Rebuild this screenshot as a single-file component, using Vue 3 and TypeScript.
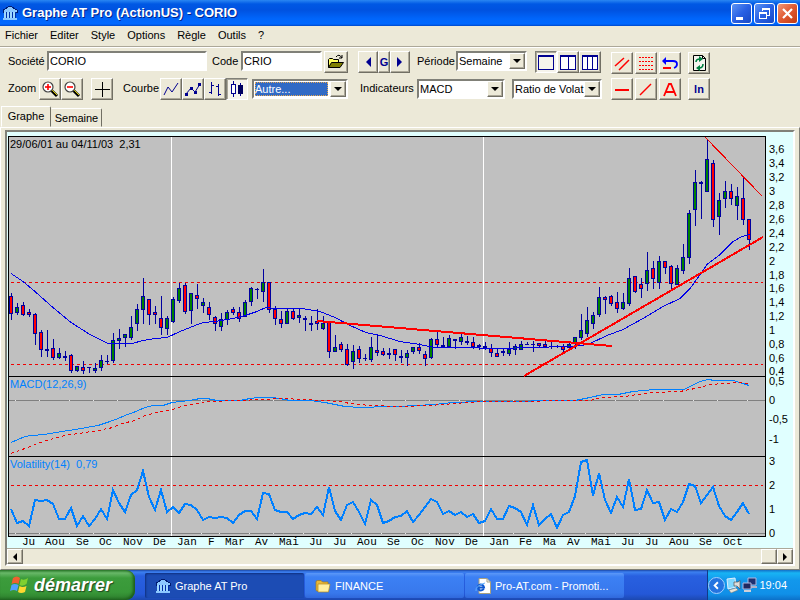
<script setup lang="ts">
import { ref } from 'vue'

type Kind = 'g' | 'r' | 'd'
type Bar = [high: number, top: number, bottom: number, low: number, kind: Kind]

const STEP = 6
const FIRST_X = 11

const bars: Bar[] = [
  [293, 296, 314, 320, 'r'], [303, 307, 313, 315, 'g'], [302, 305, 315, 316, 'r'], [309, 312, 315, 317, 'r'],
  [313, 314, 334, 345, 'r'], [330, 332, 350, 357, 'r'], [330, 349, 351, 357, 'd'], [339, 348, 358, 360, 'r'],
  [348, 353, 358, 359, 'g'], [351, 356, 358, 361, 'd'], [354, 355, 371, 373, 'r'], [366, 366, 371, 372, 'g'],
  [361, 367, 371, 374, 'r'], [367, 367, 368, 373, 'd'], [363, 368, 371, 373, 'g'], [355, 360, 368, 371, 'g'],
  [355, 361, 362, 364, 'd'], [333, 340, 361, 363, 'g'], [329, 338, 341, 349, 'g'], [334, 334, 338, 347, 'g'],
  [316, 327, 338, 340, 'g'], [304, 309, 324, 331, 'g'], [278, 296, 310, 324, 'g'], [299, 299, 315, 325, 'r'],
  [306, 312, 315, 324, 'r'], [296, 318, 328, 335, 'r'], [316, 318, 329, 335, 'g'], [297, 299, 322, 323, 'g'],
  [283, 288, 301, 303, 'g'], [283, 285, 312, 314, 'r'], [293, 293, 311, 324, 'g'], [284, 295, 299, 309, 'r'],
  [298, 302, 306, 313, 'g'], [302, 307, 315, 320, 'r'], [316, 317, 324, 331, 'r'], [313, 319, 327, 331, 'g'],
  [310, 312, 320, 325, 'g'], [307, 309, 313, 315, 'r'], [307, 312, 319, 322, 'r'], [300, 302, 317, 317, 'g'],
  [287, 288, 302, 306, 'g'], [288, 289, 290, 299, 'd'], [269, 282, 292, 302, 'g'], [282, 282, 310, 313, 'r'],
  [306, 309, 319, 325, 'r'], [311, 319, 324, 328, 'r'], [309, 311, 324, 324, 'g'], [309, 311, 319, 320, 'r'],
  [309, 315, 318, 323, 'g'], [316, 318, 320, 331, 'd'], [316, 323, 325, 331, 'd'], [309, 321, 324, 330, 'r'],
  [316, 323, 329, 330, 'g'], [322, 322, 352, 358, 'r'], [335, 347, 352, 352, 'g'], [342, 344, 350, 352, 'r'],
  [344, 349, 365, 366, 'r'], [345, 351, 362, 369, 'g'], [346, 349, 359, 363, 'r'], [354, 358, 359, 361, 'd'],
  [337, 347, 360, 362, 'g'], [334, 350, 353, 356, 'r'], [348, 351, 355, 356, 'r'], [348, 353, 355, 359, 'd'],
  [349, 349, 355, 361, 'r'], [350, 356, 358, 363, 'd'], [350, 353, 358, 366, 'g'], [347, 347, 352, 354, 'g'],
  [343, 347, 351, 354, 'r'], [351, 354, 359, 366, 'r'], [338, 339, 358, 359, 'g'], [331, 339, 345, 348, 'r'],
  [337, 345, 347, 348, 'd'], [335, 338, 347, 348, 'g'], [339, 339, 341, 349, 'd'], [334, 337, 342, 345, 'g'],
  [336, 341, 343, 345, 'd'], [337, 342, 347, 349, 'r'], [344, 345, 347, 350, 'd'], [342, 346, 349, 350, 'd'],
  [344, 348, 353, 357, 'r'], [349, 353, 357, 357, 'r'], [348, 351, 353, 356, 'd'], [342, 349, 354, 356, 'g'],
  [344, 346, 350, 355, 'g'], [341, 344, 350, 350, 'g'], [342, 344, 345, 345, 'd'], [341, 344, 345, 352, 'd'],
  [343, 343, 346, 348, 'r'], [341, 344, 347, 347, 'r'], [342, 346, 347, 349, 'd'], [345, 346, 347, 348, 'd'],
  [344, 346, 350, 352, 'r'], [342, 344, 348, 349, 'g'], [337, 337, 344, 349, 'g'], [314, 330, 338, 340, 'g'],
  [307, 320, 334, 337, 'g'], [312, 315, 324, 329, 'g'], [287, 297, 315, 317, 'g'], [296, 297, 300, 314, 'r'],
  [295, 296, 304, 306, 'r'], [292, 302, 309, 313, 'r'], [293, 302, 309, 310, 'g'], [268, 278, 304, 306, 'g'],
  [276, 276, 292, 293, 'r'], [278, 284, 289, 298, 'r'], [252, 270, 284, 291, 'g'], [261, 268, 279, 289, 'r'],
  [256, 261, 283, 289, 'g'], [261, 261, 268, 274, 'r'], [265, 266, 284, 289, 'r'], [265, 268, 285, 285, 'g'],
  [244, 257, 271, 274, 'g'], [210, 213, 258, 264, 'g'], [170, 182, 210, 226, 'g'], [181, 182, 184, 219, 'd'],
  [139, 159, 192, 192, 'g'], [160, 163, 220, 227, 'r'], [193, 200, 217, 235, 'g'], [181, 191, 199, 208, 'g'],
  [184, 191, 199, 205, 'r'], [187, 196, 206, 220, 'g'], [177, 198, 220, 225, 'r'], [219, 219, 240, 250, 'r'],
]
const candles = bars.map(([high, top, bottom, low, kind], i) => ({
  x: FIRST_X + i * STEP, high, top, bottom, low, kind,
}))
const FILL: Record<Kind, string> = { g: '#008000', r: '#ff0000', d: '#0000a0' }

// Volatility readings, in thirds of a pixel from the top of the indicator area
const volatility = [
  418, 458, 452, 468, 390, 393, 390, 403, 447, 446, 413, 468, 437, 468, 447, 416, 446, 359, 399, 425, 374, 361, 302,
  380, 419, 360, 426, 410, 429, 402, 404, 421, 450, 442, 443, 440, 443, 459, 436, 424, 423, 446, 369, 372, 419, 426,
  427, 447, 435, 429, 432, 411, 434, 350, 424, 449, 405, 396, 425, 461, 390, 406, 459, 453, 441, 437, 424, 457, 436,
  411, 387, 397, 432, 422, 435, 426, 440, 432, 459, 452, 417, 446, 447, 408, 413, 426, 464, 405, 464, 446, 433, 474,
  434, 425, 378, 276, 270, 378, 309, 390, 429, 380, 411, 327, 420, 416, 360, 398, 397, 450, 417, 427, 396, 342, 347,
  399, 375, 350, 408, 439, 450, 425, 399, 433,
]
const volPoints = volatility.map((v, i) => `${FIRST_X + i * STEP},${Math.round(370 + v / 3)}`).join(' ')

const average =
  '11,273 23,281 35,291 53,307 71,322 90,334 108,343 132,343 143,340 155,338 167,337 180,331 195,325 203,322 215,321 233,318 245,315 257,311 266,307 276,308 302,308 320,311 335,317 350,325 366,332 380,335 400,341 420,344 434,347 460,347 500,348 530,347 570,346 582,345 590,343 607,335 623,329 643,318 663,306 680,298 690,288 698,277 707,264 720,254 733,241 742,236 750,234'
const macd =
  '11,442 18,439 25,436 32,435 44,434 56,432 75,429 98,425 110,421 118,418 125,415 136,411 145,407 153,405 163,405 172,402 180,401 190,400 200,398 207,398 217,400 225,400 240,400 250,398 258,397 272,397 280,398 290,400 310,400 325,402 335,404 345,406 360,407 368,407 380,406 400,406 415,405 435,404 452,402 480,401 528,401 535,400 575,400 590,397 603,394 618,394 633,391 655,389 684,389 690,386 700,381 708,379 715,380 733,380 740,382 749,385'
const signal =
  '11,453 25,448 40,442 50,439 65,435 85,432 98,430 113,427 122,423 135,420 145,415 160,411 172,409 185,405 200,403 210,401 240,400 260,399 280,398 305,399 325,400 340,401 350,403 370,405 400,406 430,405 455,403 480,401 525,401 560,400 590,400 602,397 625,396 650,392 680,391 700,387 710,384 725,383 740,382 749,383'

const axis: [string, number][] = [
  ['3,6', 149], ['3,4', 163], ['3,2', 177], ['3', 191], ['2,8', 205], ['2,6', 219], ['2,4', 233], ['2,2', 247],
  ['2', 261], ['1,8', 275], ['1,6', 288], ['1,4', 302], ['1,2', 316], ['1', 330], ['0,8', 344], ['0,6', 358],
]
const lowerAxis: [string, number][] = [
  ['0,5', 381], ['0', 400], ['-0,5', 419], ['-1', 439], ['3', 461], ['2', 485], ['1', 509], ['0', 533],
]
const months: [string, number][] = [
  ['Ju', 22], ['Aou', 45], ['Se', 76], ['Oc', 99], ['Nov', 123], ['De', 153], ['Jan', 177], ['F', 208], ['Mar', 225],
  ['Av', 255], ['Mai', 279], ['Ju', 309], ['Ju', 333], ['Aou', 357], ['Se', 387], ['Oc', 411], ['Nov', 435],
  ['De', 465], ['Jan', 489], ['Fe', 519], ['Ma', 543], ['Av', 567], ['Mai', 591], ['Ju', 621], ['Ju', 645],
  ['Aou', 669], ['Se', 699], ['Oct', 723],
]
const ticks = [
  15, 39, 69, 93, 117, 147, 171, 201, 219, 249, 273, 303, 327, 351, 381, 405, 429, 459, 483, 513, 537, 561, 585, 615,
  639, 663, 693, 717, 747,
]

const range = '29/06/01 au 04/11/03  2,31'
const volLabel = 'Volatility(14)  0,79'
const menus = ['Fichier', 'Editer', 'Style', 'Options', 'Règle', 'Outils', '?']
const company = ref('CORIO')
const code = ref('CRIO')
const period = ref('Semaine')
const mode = ref('Autre...')
const indicator = ref('MACD')
const ratio = ref('Ratio de Volat')
const position = ref(100)
</script>

<template>
  <div class="screen">
    <header class="title">
      <svg class="logo" viewBox="0 0 16 16" width="16" height="16" shape-rendering="crispEdges">
        <path d="M1 5 8 1l7 4v2H1z" fill="#8cc8ff" stroke="#001c70" />
        <path d="M1 13h14v2H1z" fill="#8cc8ff" />
        <path d="M2 7h12v6H2z" fill="#0030a8" />
        <path d="M3 7v6M6 7v6M9 7v6M12 7v6" stroke="#a0d8ff" stroke-width="2" />
      </svg>
      <h1>Graphe AT Pro (ActionUS) - CORIO</h1>
      <div class="caption">
        <button type="button" aria-label="Réduire"><svg viewBox="0 0 19 19"><path d="M4 13h7v3H4z" fill="#fff" /></svg></button>
        <button type="button" aria-label="Restaurer">
          <svg viewBox="0 0 19 19" fill="none" stroke="#fff" shape-rendering="crispEdges"><path d="M7.5 7V4.5h7v7H12M7 5.5h8M4.5 8.500h7v6h-7zM4 9.5h8" /></svg>
        </button>
        <button type="button" aria-label="Fermer" class="close">
          <svg viewBox="0 0 19 19"><path d="m5 5 9 9m0-9-9 9" stroke="#fff" stroke-width="2.2" /></svg>
        </button>
      </div>
    </header>

    <nav class="menu">
      <button v-for="m in menus" :key="m" type="button">{{ m }}</button>
    </nav>

    <section class="tools">
      <div class="left">
        <div class="row">
          <label class="w39" for="company">Société</label>
          <input id="company" v-model="company" class="field company" type="text" />
          <label class="w29" for="code">Code</label>
          <input id="code" v-model="code" class="field code" type="text" />
          <button type="button" class="btn open" aria-label="Ouvrir">
            <svg viewBox="0 0 18 16" width="18" height="16">
              <path d="M1.5 13.5v-8l1-1h3l1 1h5v3" fill="#ffff60" stroke="#000" />
              <path d="m1.5 13.5 3-5h12l-3.5 5z" fill="#808000" stroke="#000" />
              <path d="M9 3q3-4 6 1m0-3v3h-3" fill="none" stroke="#000" />
            </svg>
          </button>
          <div class="group steps">
            <button type="button" class="btn b20" aria-label="Précédent"><svg viewBox="0 0 16 16" width="16" height="16"><path d="M11 3v10L6 8z" fill="#000090" /></svg></button>
            <button type="button" class="btn b12">G</button>
            <button type="button" class="btn b20" aria-label="Suivant"><svg viewBox="0 0 16 16" width="16" height="16"><path d="M5 3v10l5-5z" fill="#000090" /></svg></button>
          </div>
          <label class="w39" for="period">Période</label>
          <span class="combo period"><select id="period" v-model="period"><option>Semaine</option></select><i /></span>
          <div class="group views">
            <button type="button" class="btn down" aria-label="Une vue"><svg viewBox="0 0 18 18" shape-rendering="crispEdges"><path d="M1.5 2.5h15v14h-15z" fill="none" stroke="#000090" /><path d="M1 2h16v2H1z" fill="#000090" /></svg></button>
            <button type="button" class="btn" aria-label="Deux vues"><svg viewBox="0 0 18 18" shape-rendering="crispEdges"><path d="M1.5 2.5h15v14h-15zM9.5 2v14" fill="#fff" stroke="#000090" /><path d="M1 2h16v2H1z" fill="#000090" /></svg></button>
            <button type="button" class="btn" aria-label="Trois vues"><svg viewBox="0 0 18 18" shape-rendering="crispEdges"><path d="M1.5 2.5h15v14h-15zM6.5 2v14M11.5 2v14" fill="#fff" stroke="#000090" /><path d="M1 2h16v2H1z" fill="#000090" /></svg></button>
          </div>
        </div>
        <div class="row second">
          <span class="w31">Zoom</span>
          <div class="group">
            <button v-for="z in ['Agrandir', 'Réduire']" :key="z" type="button" class="btn" :aria-label="z">
              <svg viewBox="0 0 18 18">
                <path d="m10 10 6 6" stroke="#000" stroke-width="3" />
                <path d="m11 10 5 5" stroke="#e0d000" stroke-width="1" />
                <circle cx="7" cy="7" r="5" fill="#fff" stroke="#444" stroke-width="1.2" />
                <path d="M4 7h6" stroke="#f00" stroke-width="1.6" />
                <path v-if="z === 'Agrandir'" d="M7 4v6" stroke="#f00" stroke-width="1.6" />
              </svg>
            </button>
          </div>
          <button type="button" class="btn cross" aria-label="Réticule"><svg viewBox="0 0 18 18" shape-rendering="crispEdges"><path d="M2 9.5h15M9.5 2v15" stroke="#000" /></svg></button>
          <span class="w37">Courbe</span>
          <div class="group">
            <button type="button" class="btn" aria-label="Ligne"><svg viewBox="0 0 18 18"><path d="m2 15 4-8 4 5 6-9" fill="none" stroke="#000090" /></svg></button>
            <button type="button" class="btn" aria-label="Points"><svg viewBox="0 0 18 18"><path d="m2 14 5-6 4 4 5-8" fill="none" stroke="#000090" /><path d="M1 13h3v3H1zM6 7h3v3H6zM10 11h3v3h-3zM14 3h3v3h-3z" fill="#000090" /></svg></button>
            <button type="button" class="btn" aria-label="Barres"><svg viewBox="0 0 18 18" shape-rendering="crispEdges"><path d="M5.5 2v12M3 12.5h3M5 5.5h3M12.5 4v12M10 6.5h3M12 14.5h3" fill="none" stroke="#000090" /></svg></button>
            <button type="button" class="btn down" aria-label="Chandeliers"><svg viewBox="0 0 18 18" shape-rendering="crispEdges"><path d="M3.5 4.5h4v9h-4zM5.5 1v3M5.5 14v3M12.5 3v13" fill="#fff" stroke="#000090" /><path d="M10 5h5v9h-5z" fill="#000060" /></svg></button>
          </div>
          <span class="combo mode"><select v-model="mode" aria-label="Mode"><option>Autre...</option></select><i /></span>
          <label class="w57" for="indicator">Indicateurs</label>
          <span class="combo indicator"><select id="indicator" v-model="indicator"><option>MACD</option></select><i /></span>
          <span class="combo ratio"><select v-model="ratio" aria-label="Ratio"><option>Ratio de Volat</option></select><i /></span>
        </div>
      </div>
      <div class="right">
        <button type="button" class="btn" aria-label="Parallèles"><svg viewBox="0 0 18 18"><path d="M2 12 11 4M6 16 16 6" stroke="#f00" stroke-width="1.5" /></svg></button>
        <button type="button" class="btn" aria-label="Niveaux"><svg viewBox="0 0 18 18" shape-rendering="crispEdges"><path d="M2 3.5h14M2 7.5h14M2 11.5h14M2 15.5h14" stroke="#f00" stroke-dasharray="2 1" /></svg></button>
        <button type="button" class="btn" aria-label="Annuler"><svg viewBox="0 0 18 18"><path d="M3 7h9q4 0 4 3 0 3-3 4" fill="none" stroke="#00f" stroke-width="1.8" /><path d="M1 7 5 3v8z" fill="#00f" /><path d="M2 13h8v2H2z" fill="#f00" /></svg></button>
        <button type="button" class="btn last" aria-label="Actualiser"><svg viewBox="0 0 18 18"><path d="M3.5 1.5h9l3 3v12h-12z" fill="#f4f4ee" stroke="#000" /><path d="M12.5 1.5v3h3" fill="none" stroke="#000" /><path d="M6 8q0-3 4-3M13 10q0 4-4 4" fill="none" stroke="#008040" stroke-width="1.6" /><path d="m9 2 4 3-4 3zM10 11v6l-4-3z" fill="#008040" /></svg></button>
        <button type="button" class="btn" aria-label="Horizontale"><svg viewBox="0 0 18 18"><path d="M2 9h14v2H2z" fill="#f00" /></svg></button>
        <button type="button" class="btn" aria-label="Droite"><svg viewBox="0 0 18 18"><path d="M3 15 14 4" stroke="#f00" stroke-width="1.5" /></svg></button>
        <button type="button" class="btn" aria-label="Texte"><svg viewBox="0 0 18 18"><path d="M3 16 8 4h2l5 12M5 12h8" fill="none" stroke="#f00" stroke-width="1.8" /></svg></button>
        <button type="button" class="btn last">ln</button>
      </div>
    </section>

    <div class="tabs" role="tablist">
      <button type="button" role="tab" class="tab on" aria-selected="true">Graphe</button>
      <button type="button" role="tab" class="tab" aria-selected="false">Semaine</button>
    </div>

    <main class="page">
      <div class="sunken">
        <svg class="chart" viewBox="7 132 786 416" role="img" aria-label="CORIO">
          <g shape-rendering="crispEdges">
            <rect x="8" y="136" width="758" height="401" fill="#000" />
            <rect x="9" y="137" width="756" height="399" fill="#c0c0c0" />
            <path d="M9 400.5h756M9 533.5h756" stroke="#808080" />
            <path v-for="t in ticks" :key="t" :d="`M${t}.5 400v1M${t}.5 533v1`" stroke="#e8e8e8" />
            <path d="M171.5 137v399M483.5 137v399" stroke="#fff" />
            <path d="M9 376.5h756M9 456.5h756" stroke="#000" />
            <path d="M11 282.5h752M11 364.5h752M11 485.5h752" stroke="#f00000" stroke-dasharray="3 3" />
            <g v-for="c in candles" :key="c.x">
              <rect :x="c.x" :y="c.high" width="1" :height="c.low - c.high" fill="#0000a0" />
              <rect :x="c.x - 2" :y="c.top" width="4" :height="c.bottom - c.top" fill="#0000a0" />
              <rect v-if="c.kind !== 'd'" :x="c.x - 1" :y="c.top + 1" width="2" :height="c.bottom - c.top - 2" :fill="FILL[c.kind]" />
            </g>
            <g fill="none">
              <polyline :points="average" stroke="#0000e8" transform="translate(0 .5)" />
              <path d="m317 321 295 25M524 376l239-139" stroke="#f00" stroke-width="2" />
              <path d="m705 137 57 59" stroke="#f00000" />
              <polyline :points="macd" stroke="#0080ff" transform="translate(0 .5)" />
              <polyline :points="signal" stroke="#f00000" stroke-dasharray="3 3" transform="translate(0 .5)" />
              <polyline :points="volPoints" stroke="#0080ff" stroke-width="2" />
            </g>
          </g>
          <clipPath id="main-axis"><rect x="766" y="132" width="28" height="244" /></clipPath>
          <text x="10" y="148">{{ range }}</text>
          <text x="10" y="388" class="ind">MACD(12,26,9)</text>
          <text x="10" y="468" class="ind">{{ volLabel }}</text>
          <text v-for="[label, y] in axis" :key="y" x="769" :y="y + 4">{{ label }}</text>
          <text x="769" y="375" clip-path="url(#main-axis)">0,4</text>
          <text v-for="[label, y] in lowerAxis" :key="y" x="769" :y="y + 4">{{ label }}</text>
          <text v-for="[label, x] in months" :key="x" :x="x" y="545" class="month">{{ label }}</text>
        </svg>
        <div class="scroll">
          <button type="button" class="arrow" aria-label="Gauche"><svg viewBox="0 0 8 8"><path d="M6 0v8L2 4z" /></svg></button>
          <input v-model="position" type="range" min="0" max="100" aria-label="Position" />
          <button type="button" class="arrow" aria-label="Droite"><svg viewBox="0 0 8 8"><path d="M2 0v8l4-4z" /></svg></button>
        </div>
      </div>
    </main>

    <footer class="taskbar">
      <button type="button" class="start">
        <svg viewBox="0 0 20 20" width="20" height="20">
          <path d="M3 3q4-3 7 0L8.5 9q-3-2-7 0z" fill="#f06030" /><path d="M11 4q3 2 7-1l-1.5 6q-4 3-7 1z" fill="#80d030" />
          <path d="M1.5 10q3-2 7 0L7 16q-3-2-7 0z" fill="#50a0ff" /><path d="M9.5 11q3 2 7 0L15 17q-4 2-7 0z" fill="#ffd830" />
        </svg>
        <span>démarrer</span>
      </button>
      <div class="tasks">
        <button type="button" class="task on">
          <svg viewBox="0 0 16 16" width="16" height="16" shape-rendering="crispEdges">
            <path d="M1 5 8 1l7 4v2H1z" fill="#8cc8ff" stroke="#001c70" /><path d="M1 13h14v2H1z" fill="#8cc8ff" /><path d="M2 7h12v6H2z" fill="#0030a8" />
            <path d="M3 7v6M6 7v6M9 7v6M12 7v6" stroke="#a0d8ff" stroke-width="2" />
          </svg>
          <span>Graphe AT Pro</span>
        </button>
        <button type="button" class="task">
          <svg viewBox="0 0 16 16" width="16" height="16">
            <path d="M1 4q0-1.5 1.5-1.5H6L7.5 4H13v9H2.5Q1 13 1 12z" fill="#e8b838" stroke="#a07818" stroke-width=".7" /><path d="M3 6h12l-1.5 8H3z" fill="#fff0a0" stroke="#b08820" stroke-width=".7" />
          </svg>
          <span>FINANCE</span>
        </button>
        <button type="button" class="task">
          <svg viewBox="0 0 16 16" width="16" height="16">
            <path d="M4 .5h8l3.500 3.500v11.500H4z" fill="#fff" stroke="#a8a080" /><path d="M12 .5V4h3.500" fill="none" stroke="#a8a080" />
            <path d="M9 11q-4 3-5.500 0-1.500-4 2-4.500 3 0 3.500 3H3.500" fill="none" stroke="#1058d0" stroke-width="2" /><path d="M1 13q-1-5 9-8" fill="none" stroke="#60b0ff" />
          </svg>
          <span>Pro-AT.com - Promoti...</span>
        </button>
      </div>
      <div class="tray">
        <button type="button" class="more" aria-label="Afficher les icônes"><svg viewBox="0 0 16 16"><path d="M9.5 4.5 6 8l3.500 3.500" fill="none" stroke="#fff" stroke-width="2" /></svg></button>
        <svg viewBox="0 0 16 16" width="16" height="16">
          <path d="M1 2 9 1l1 9-8 2z" fill="#80d8ff" stroke="#e0f0ff" /><path d="m3 13 7-2 2 2-7 3z" fill="#e8e4d8" stroke="#777" stroke-width=".5" /><path d="M8 5h4l2-1.500V12L11 9H8z" fill="#ddd" stroke="#555" stroke-width=".7" />
        </svg>
        <svg viewBox="0 0 16 16" width="16" height="16">
          <path d="M6 1h8v7H6z" fill="#203070" stroke="#b0b8e0" /><path d="M8 9h7v2H8z" fill="#b0b0c8" /><path d="M1 6h8v6H1z" fill="#202860" stroke="#b0b8e0" /><path d="M2 13h7v2H2z" fill="#d0d0d8" />
        </svg>
        <time>19:04</time>
      </div>
    </footer>
  </div>
</template>

<style>
body {
  margin: 0;
  background: #ece9d8;
}
</style>

<style scoped>
* {
  box-sizing: border-box;
}
.screen {
  display: flex;
  flex-direction: column;
  min-height: 100vh;
  background: #ece9d8;
  color: #000;
  font: 11px/14px 'Liberation Sans', Arial, sans-serif;
}
button,
input,
select {
  margin: 0;
  padding: 0;
  border: 0;
  border-radius: 0;
  background: none;
  color: inherit;
  font: inherit;
}
.title {
  display: flex;
  align-items: center;
  height: 26px;
  padding: 0 2px;
  gap: 4px;
  background: linear-gradient(#2a86f2, #0058e4 4px, #0052e0 10px, #0066fc 19px, #0068ff 24px, #0048c8);
}
.title h1 {
  flex: 1;
  margin: 0;
  color: #fff;
  font: bold 13px/18px 'Liberation Sans', Arial, sans-serif;
  text-shadow: 1px 1px #00248c;
}
.caption {
  display: flex;
  gap: 2px;
}
.caption button {
  width: 21px;
  height: 21px;
  border: 1px solid #fff;
  border-radius: 3px;
  background: linear-gradient(135deg, #5c94f4, #2860e4 50%, #1848c4);
}
.caption button.close {
  background: linear-gradient(135deg, #f09878, #e05830 50%, #c03c14);
}
.caption svg {
  display: block;
  width: 19px;
  height: 19px;
}
.menu {
  display: flex;
  gap: 12px;
  height: 21px;
  padding: 2px 5px 5px;
  border-bottom: 1px solid #aca899;
  box-shadow: 0 1px #fff;
}
.tools {
  display: flex;
  gap: 9px;
  padding: 4px 0 0 8px;
}
.row {
  display: flex;
  align-items: flex-start;
  height: 22px;
}
.row > label,
.row > span:not(.combo) {
  flex: none;
  line-height: 21px;
}
.second {
  margin-top: 5px;
}
.w29 { width: 29px; }
.w31 { width: 31px; }
.w37 { width: 37px; }
.w39 { width: 39px; }
.w57 { width: 57px; }
.group {
  display: flex;
}
.field {
  height: 20px;
  padding: 0 1px;
  border: 2px solid;
  border-color: #808078 #fff #fff #808078;
  background: #fff;
}
.company {
  width: 160px;
  margin-right: 5px;
}
.code {
  width: 81px;
  margin-right: 2px;
}
.steps {
  margin: 0 7px 0 10px;
}
.btn {
  display: flex;
  align-items: center;
  justify-content: center;
  flex: none;
  width: 22px;
  height: 22px;
  border: 1px solid;
  border-color: #fff #716f64 #716f64 #fff;
  box-shadow: inset -1px -1px #aca899;
  color: #000090;
  font-weight: bold;
}
.btn svg {
  flex: none;
}
.btn svg:not([width]) {
  width: 18px;
  height: 18px;
}
.btn.down {
  border-color: #808078 #fff #fff #808078;
  background: #f6f4ec;
  box-shadow: inset 1px 1px #aca899;
}
.btn.open {
  width: 24px;
}
.btn.b20 {
  width: 20px;
}
.btn.b12 {
  width: 12px;
}
.views {
  margin-left: 8px;
}
.cross {
  margin: 0 10px 0 8px;
}
.combo {
  position: relative;
  flex: none;
  height: 20px;
}
.combo select {
  display: block;
  width: 100%;
  height: 20px;
  padding: 1px 16px 1px 1px;
  border: 2px solid;
  border-color: #808078 #fff #fff #808078;
  appearance: none;
  background: #fff;
  line-height: 14px;
}
.combo i {
  position: absolute;
  top: 2px;
  right: 2px;
  width: 16px;
  height: 16px;
  border: 1px solid;
  border-color: #fff #716f64 #716f64 #fff;
  box-shadow: inset -1px -1px #aca899;
  background: #ece9d8;
  pointer-events: none;
}
.combo i::after {
  content: '';
  position: absolute;
  top: 5px;
  left: 3px;
  border: 4px solid transparent;
  border-top-color: #000;
  border-bottom: 0;
}
.period {
  width: 71px;
}
.mode {
  width: 96px;
  margin: 1px 12px 0 4px;
}
.mode select {
  padding-right: 18px;
  background: linear-gradient(#316ac5, #316ac5) content-box, #fff;
  color: #fff;
}
.mode::before {
  content: '';
  position: absolute;
  inset: 3px 20px 3px 3px;
  border: 1px dotted #e8a850;
  pointer-events: none;
}
.indicator {
  width: 88px;
  margin: 1px 7px 0 0;
}
.ratio {
  width: 90px;
  margin-top: 1px;
}
.right {
  display: grid;
  grid-template-columns: 22px 22px 22px 27px;
  gap: 4px 2px;
  padding-top: 1px;
}
.last {
  justify-self: end;
}
.tabs {
  display: flex;
  align-items: flex-end;
  height: 27px;
  padding-left: 1px;
}
.tab {
  height: 19px;
  width: 51px;
  border: 1px solid;
  border-color: #fff #716f64 transparent transparent;
  border-radius: 0 2px 0 0;
}
.tab.on {
  height: 21px;
  width: 50px;
  border-left-color: #fff;
  padding-bottom: 2px;
}
.page {
  flex: 1;
  padding: 2px 4px 3px;
  border: 1px solid;
  border-color: #fff #808078 #808078 #fff;
}
.sunken {
  border: 2px solid;
  border-color: #808078 #fff #fff #808078;
  background: #e0ffff;
}
.chart {
  display: block;
  width: 100%;
  height: auto;
  background: #e0ffff;
  font: 11px 'Liberation Sans', Arial, sans-serif;
}
.chart text {
  white-space: pre;
}
.ind {
  fill: #0080ff;
}
.month {
  font: 11px 'Liberation Mono', 'Courier New', monospace;
}
.scroll {
  display: flex;
  height: 16px;
  border-top: 1px solid #aca899;
  background: #ece9d8;
}
.scroll input {
  flex: 1;
  min-width: 0;
  height: 15px;
  appearance: none;
}
.scroll input::-webkit-slider-thumb {
  appearance: none;
  width: 16px;
  height: 15px;
  border: 1px solid;
  border-color: #fff #716f64 #716f64 #fff;
  box-shadow: inset -1px -1px #aca899;
  background: #ece9d8;
}
.arrow {
  display: flex;
  align-items: center;
  justify-content: center;
  width: 16px;
  border: 1px solid;
  border-color: #fff #716f64 #716f64 #fff;
  box-shadow: inset -1px -1px #aca899;
}
.arrow svg {
  width: 8px;
  height: 8px;
}
.taskbar {
  display: flex;
  height: 30px;
  background: linear-gradient(#1c48a8, #3c80f0 2px, #2860e0 6px, #2458d8 24px, #1c48b0);
  color: #fff;
}
.start {
  display: flex;
  align-items: center;
  gap: 4px;
  width: 135px;
  padding-left: 10px;
  border-radius: 0 9px 9px 0;
  background: linear-gradient(#2c7c2c, #68b868 3px, #3c9c3c 8px, #389838 22px, #2c7c2c);
  box-shadow: inset -2px -1px 3px #1c5c1c;
  font: italic bold 18px/22px 'Liberation Sans', Arial, sans-serif;
  text-shadow: 1px 1px 1px #204820;
}
.tasks {
  display: flex;
  flex: 1;
  gap: 1px;
  padding: 3px 0 2px 10px;
}
.task {
  display: flex;
  align-items: center;
  gap: 4px;
  width: 159px;
  padding-left: 10px;
  border-radius: 2px;
  background: linear-gradient(#5c98f8, #3c80f4 4px, #3878ec 20px, #3068dc);
}
.task.on {
  background: #1c4cb4;
  box-shadow: inset 1px 1px 2px #103080;
}
.tray {
  display: flex;
  align-items: center;
  width: 93px;
  padding-right: 13px;
  border-left: 1px solid #103c88;
  background: linear-gradient(#1470c8, #18b4f4 3px, #1298ec 10px, #1090e8 24px, #0c70c8);
}
.more {
  flex: none;
  width: 17px;
  height: 17px;
  margin-right: 1px;
  border: 1px solid #a0d0ff;
  border-radius: 50%;
  background: #2474e0;
}
.more svg {
  display: block;
}
.tray time {
  margin-left: auto;
}
</style>
